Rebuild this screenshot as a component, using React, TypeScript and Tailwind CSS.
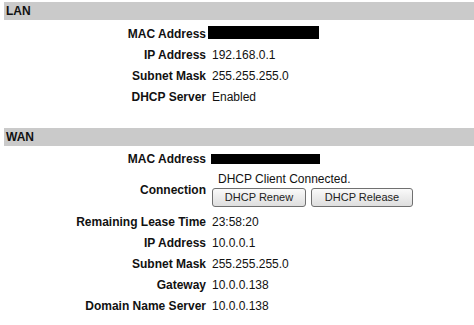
import React from 'react';

type Row = { label: string; value: React.ReactNode };

const Bar: React.FC<{ title: string }> = ({ title }) => (
  <div className="ml-[4px] h-[18px] bg-[#cacaca] pl-[2px] text-[12px] font-bold leading-[18px] text-[#111]">
    {title}
  </div>
);

const Masked: React.FC<{ className: string }> = ({ className }) => (
  <div className={`bg-black ${className}`} />
);

const Button: React.FC<{ children: React.ReactNode; w: string }> = ({ children, w }) => (
  <button
    className={`${w} h-[19px] rounded-[3px] border border-[#707070] bg-gradient-to-b from-[#fafafa] to-[#dedede] text-[11px] leading-[17px] text-[#222]`}
  >
    {children}
  </button>
);

const Table: React.FC<{ rows: Row[] }> = ({ rows }) => (
  <div className="grid grid-cols-[206px_1fr] gap-x-[6px]">
    {rows.map((r, i) => (
      <React.Fragment key={i}>
        <div className="flex min-h-[21px] items-center justify-end font-bold">{r.label}</div>
        <div className="flex min-h-[21px] items-center">{r.value}</div>
      </React.Fragment>
    ))}
  </div>
);

export default function App() {
  const lan: Row[] = [
    { label: 'MAC Address', value: <Masked className="-ml-[4px] mb-[3px] h-[13px] w-[111px]" /> },
    { label: 'IP Address', value: '192.168.0.1' },
    { label: 'Subnet Mask', value: '255.255.255.0' },
    { label: 'DHCP Server', value: 'Enabled' },
  ];

  const wan: Row[] = [
    { label: 'MAC Address', value: <Masked className="-ml-[1px] h-[10px] w-[109px]" /> },
    {
      label: 'Connection',
      value: (
        <div className="flex flex-col pt-[3px] pb-[4px]">
          <div className="pl-[6px] leading-[15px]">DHCP Client Connected.</div>
          <div className="mt-[1px] flex gap-[5px]">
            <Button w="w-[94px]">DHCP Renew</Button>
            <Button w="w-[102px]">DHCP Release</Button>
          </div>
        </div>
      ),
    },
    { label: 'Remaining Lease Time', value: '23:58:20' },
    { label: 'IP Address', value: '10.0.0.1' },
    { label: 'Subnet Mask', value: '255.255.255.0' },
    { label: 'Gateway', value: '10.0.0.138' },
    { label: 'Domain Name Server', value: '10.0.0.138' },
  ];

  return (
    <div className="h-[325px] w-[474px] overflow-hidden bg-white pt-[2px] font-['Liberation_Sans',Arial,sans-serif] text-[12px] text-[#111]">
      <Bar title="LAN" />
      <div className="pt-[3px]">
        <Table rows={lan} />
      </div>
      <div className="mt-[21px]">
        <Bar title="WAN" />
      </div>
      <div className="pt-[2px]">
        <Table rows={wan} />
      </div>
    </div>
  );
}
